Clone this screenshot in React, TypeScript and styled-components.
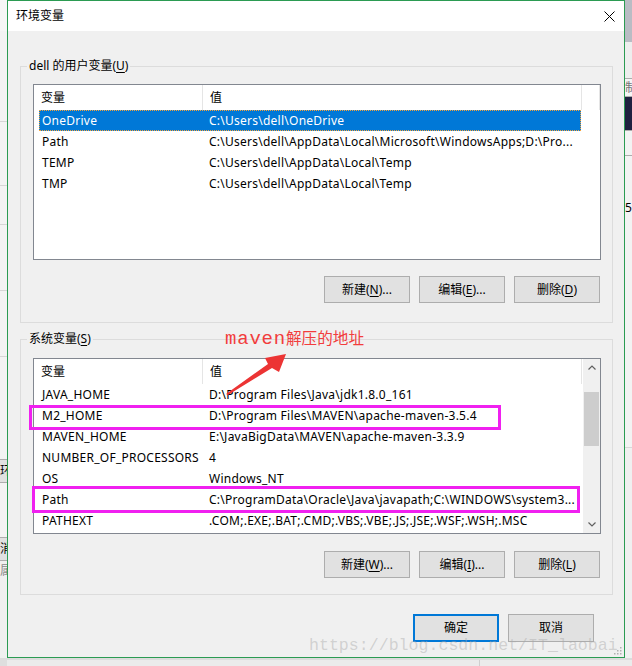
import React from "react";
import styled, { createGlobalStyle } from "styled-components";

const UI_FONT = `"Noto Sans", "Noto Sans CJK SC", sans-serif`;

const Global = createGlobalStyle`
  html, body { margin: 0; padding: 0; background: #e8e8e8; }
  body { width: 632px; height: 666px; overflow: hidden; }
  #root { width: 632px; height: 666px; }
  * { box-sizing: border-box; }
`;

const Desktop = styled.div`
  position: relative;
  width: 632px;
  height: 666px;
  display: grid;
  grid-template-columns: 7px 618px 7px;
  grid-template-rows: 658px 8px;
  grid-template-areas: "left dialog right" "bottom bottom bottom";
  background: #e8e8e8;
  overflow: hidden;
`;

/* ---------- background windows peeking out ---------- */
const StripCol = styled.div<{ $area: string }>`
  grid-area: ${(p) => p.$area};
  display: flex;
  flex-direction: column;
  overflow: hidden;
`;

const StripSeg = styled.div<{
  $h: number;
  $bg: string;
  $line?: string;
  $boxed?: boolean;
  $color?: string;
}>`
  flex: 0 0 ${(p) => p.$h}px;
  background: ${(p) => p.$bg};
  border-bottom: ${(p) => (p.$line ? `1px solid ${p.$line}` : "none")};
  ${(p) => (p.$boxed ? "border-top: 1px solid #adadad; border-bottom: 1px solid #adadad;" : "")}
  font: 12px/${(p) => p.$h - 2}px ${UI_FONT};
  color: ${(p) => p.$color ?? "#000"};
  white-space: nowrap;
  overflow: hidden;
`;

const BottomStrip = styled.div`
  grid-area: bottom;
  background: #ebebeb;
  border-top: 2px solid #dcdcdc;
  display: flex;
`;

const BottomLeft = styled.div`
  width: 7px;
  background: #dedede;
`;

const BottomSplit = styled.div`
  margin-left: 472px;
  width: 1px;
  background: #cfcfcf;
`;

type Seg = { h: number; bg: string; line?: string; text?: string; color?: string; boxed?: boolean };

const leftSegs: Seg[] = [
  { h: 31, bg: "#f6f6f6" },
  { h: 91, bg: "#f3f3f3", line: "#d6d6d6" },
  { h: 64, bg: "#f3f3f3", line: "#d6d6d6" },
  { h: 39, bg: "#f3f3f3", line: "#d6d6d6" },
  { h: 66, bg: "#f3f3f3", line: "#d6d6d6" },
  { h: 66, bg: "#f3f3f3", line: "#d6d6d6" },
  { h: 102, bg: "#f3f3f3" },
  { h: 24, bg: "#e1e1e1", boxed: true, text: "环" },
  { h: 54, bg: "#f3f3f3" },
  { h: 24, bg: "#e1e1e1", boxed: true, text: "消" },
  { h: 22, bg: "#f0f0f0", text: "属", color: "#8a8a8a" },
  { h: 80, bg: "#f0f0f0" },
];

const rightSegs: Seg[] = [
  { h: 42, bg: "#b9bcc4" },
  { h: 36, bg: "#eeeeee" },
  { h: 19, bg: "#f5f5f5", boxed: true, text: "制", color: "#777" },
  { h: 33, bg: "#1f2140" },
  { h: 26, bg: "#f3f3f3", boxed: true },
  { h: 44, bg: "#f3f3f3" },
  { h: 18, bg: "#f3f3f3", text: "51" },
  { h: 230, bg: "#f3f3f3", line: "#d8d8d8" },
  { h: 210, bg: "#f0f0f0" },
];

const Strip: React.FC<{ area: string; segs: Seg[] }> = ({ area, segs }) => (
  <StripCol $area={area}>
    {segs.map((s, i) => (
      <StripSeg key={i} $h={s.h} $bg={s.bg} $line={s.line} $boxed={s.boxed} $color={s.color}>
        {s.text}
      </StripSeg>
    ))}
  </StripCol>
);

/* ---------- dialog ---------- */
const Dialog = styled.section`
  grid-area: dialog;
  display: flex;
  flex-direction: column;
  border: 1px solid #2b9b52;
  background: #f0f0f0;
  font-family: ${UI_FONT};
  font-size: 12px;
  color: #000;
`;

const TitleBar = styled.header`
  flex: 0 0 30px;
  background: #fff;
  display: flex;
  align-items: center;
  justify-content: space-between;
  padding-left: 8px;
`;

const Title = styled.span`
  font-size: 12px;
  line-height: 16px;
`;

const CloseBtn = styled.div`
  width: 30px;
  height: 30px;
  display: flex;
  align-items: center;
  justify-content: center;
`;

const Body = styled.div`
  flex: 1;
  display: flex;
  flex-direction: column;
  padding: 35px 11px 0 12px;
`;

const Group = styled.div<{ $mt: number; $pt: number; $pb: number }>`
  position: relative;
  margin-top: ${(p) => p.$mt}px;
  border: 1px solid #dcdcdc;
  padding: ${(p) => p.$pt}px 11px ${(p) => p.$pb}px 12px;
  display: flex;
  flex-direction: column;
`;

const Legend = styled.span`
  position: absolute;
  top: -9px;
  left: 6px;
  padding: 0 2px;
  background: #f0f0f0;
  line-height: 16px;
`;

const Key = styled.span`
  text-decoration: underline;
  text-underline-offset: 2px;
`;

const ListView = styled.div`
  height: 176px;
  border: 1px solid #828790;
  background: #fff;
  display: flex;
  overflow: hidden;
`;

const ListMain = styled.div`
  flex: 1;
  min-width: 0;
  display: flex;
  flex-direction: column;
`;

const HeaderRow = styled.div`
  display: flex;
  height: 25px;
  flex: 0 0 25px;
`;

const HeaderCell = styled.div<{ $w?: number }>`
  ${(p) => (p.$w ? `flex: 0 0 ${p.$w}px;` : "flex: 1;")}
  border-right: 1px solid #e5e5e5;
  padding-left: 7px;
  line-height: 25px;
  white-space: nowrap;
`;

const Rows = styled.div`
  display: flex;
  flex-direction: column;
  padding-left: 5px;
`;

const Row = styled.div<{ $selected?: boolean }>`
  width: 542px;
  height: 21px;
  display: grid;
  grid-template-columns: 163px 1fr;
  line-height: 21px;
  white-space: nowrap;
  letter-spacing: 0.25px;
  background: ${(p) => (p.$selected ? "#0078d7" : "transparent")};
  color: ${(p) => (p.$selected ? "#fff" : "#000")};
  outline: ${(p) => (p.$selected ? "1px dotted #f7a33a" : "none")};
  outline-offset: -1px;
`;

const NameCell = styled.span`
  padding-left: 3px;
  overflow: hidden;
`;

const ValueCell = styled.span`
  padding-left: 7px;
  overflow: hidden;
`;

const ScrollBar = styled.div`
  flex: 0 0 17px;
  background: #f0f0f0;
  display: flex;
  flex-direction: column;
`;

const ScrollArrow = styled.div`
  flex: 0 0 17px;
  display: flex;
  align-items: center;
  justify-content: center;
`;

const ScrollTrack = styled.div`
  flex: 1;
  padding: 0 1px;
`;

const Thumb = styled.div`
  height: 54px;
  background: #cdcdcd;
`;

const ButtonRow = styled.div<{ $mt: number }>`
  display: flex;
  justify-content: flex-end;
  gap: 9px;
  margin-top: ${(p) => p.$mt}px;
  margin-right: 1px;
`;

const Button = styled.button<{ $default?: boolean; $h?: number }>`
  width: 86px;
  height: ${(p) => p.$h ?? 27}px;
  padding: 0;
  background: #e1e1e1;
  border: ${(p) => (p.$default ? "2px solid #0078d7" : "1px solid #adadad")};
  font-family: ${UI_FONT};
  font-size: 12px;
  color: #000;
  line-height: 16px;
`;

const Footer = styled.div`
  display: flex;
  justify-content: flex-end;
  gap: 9px;
  margin-top: 19px;
  margin-right: 19px;
`;

/* ---------- annotations drawn on top of the screenshot ---------- */
const Note = styled.div`
  position: absolute;
  left: 225px;
  top: 327px;
  color: #f23d3d;
  line-height: 20px;
  white-space: nowrap;
`;

const NoteLatin = styled.span`
  font-family: "Liberation Mono", monospace;
  font-size: 19px;
  letter-spacing: 0.8px;
`;

const NoteCjk = styled.span`
  font-family: "Noto Sans CJK SC", sans-serif;
  font-size: 15.6px;
`;

const ArrowSvg = styled.svg`
  position: absolute;
  left: 220px;
  top: 345px;
`;

const Highlight = styled.div<{ $x: number; $y: number; $w: number; $h: number }>`
  position: absolute;
  left: ${(p) => p.$x}px;
  top: ${(p) => p.$y}px;
  width: ${(p) => p.$w}px;
  height: ${(p) => p.$h}px;
  border: 3px solid #f020f0;
`;

const Watermark = styled.div`
  position: absolute;
  left: 309px;
  top: 636px;
  font-family: "Liberation Mono", monospace;
  font-size: 16.6px;
  line-height: 20px;
  color: rgba(170, 170, 170, 0.45);
  white-space: nowrap;
`;

const Grip = styled.svg`
  position: absolute;
  left: 613px;
  top: 646px;
`;

type Var = { name: string; value: string; selected?: boolean };

const userVars: Var[] = [
  { name: "OneDrive", value: "C:\\Users\\dell\\OneDrive", selected: true },
  { name: "Path", value: "C:\\Users\\dell\\AppData\\Local\\Microsoft\\WindowsApps;D:\\Pro..." },
  { name: "TEMP", value: "C:\\Users\\dell\\AppData\\Local\\Temp" },
  { name: "TMP", value: "C:\\Users\\dell\\AppData\\Local\\Temp" },
];

const sysVars: Var[] = [
  { name: "JAVA_HOME", value: "D:\\Program Files\\Java\\jdk1.8.0_161" },
  { name: "M2_HOME", value: "D:\\Program Files\\MAVEN\\apache-maven-3.5.4" },
  { name: "MAVEN_HOME", value: "E:\\JavaBigData\\MAVEN\\apache-maven-3.3.9" },
  { name: "NUMBER_OF_PROCESSORS", value: "4" },
  { name: "OS", value: "Windows_NT" },
  { name: "Path", value: "C:\\ProgramData\\Oracle\\Java\\javapath;C:\\WINDOWS\\system3..." },
  { name: "PATHEXT", value: ".COM;.EXE;.BAT;.CMD;.VBS;.VBE;.JS;.JSE;.WSF;.WSH;.MSC" },
];

const Chevron: React.FC<{ up?: boolean }> = ({ up }) => (
  <svg width="8" height="5" viewBox="0 0 8 5">
    <path
      d={up ? "M0.5 4.5 L4 1 L7.5 4.5" : "M0.5 0.5 L4 4 L7.5 0.5"}
      fill="none"
      stroke="#606060"
      strokeWidth="1.2"
    />
  </svg>
);

const VarList: React.FC<{ vars: Var[]; scroll?: boolean }> = ({ vars, scroll }) => (
  <ListView>
    <ListMain>
      <HeaderRow>
        <HeaderCell $w={169}>变量</HeaderCell>
        <HeaderCell $w={379}>值</HeaderCell>
        {!scroll && <HeaderCell />}
      </HeaderRow>
      <Rows>
        {vars.map((v) => (
          <Row key={v.name + v.value} $selected={v.selected}>
            <NameCell>{v.name}</NameCell>
            <ValueCell>{v.value}</ValueCell>
          </Row>
        ))}
      </Rows>
    </ListMain>
    {scroll && (
      <ScrollBar>
        <ScrollArrow>
          <Chevron up />
        </ScrollArrow>
        <ScrollTrack>
          <Thumb style={{ marginTop: 16 }} />
        </ScrollTrack>
        <ScrollArrow>
          <Chevron />
        </ScrollArrow>
      </ScrollBar>
    )}
  </ListView>
);

export default function App() {
  return (
    <>
      <Global />
      <Desktop>
        <Strip area="left" segs={leftSegs} />
        <Dialog>
          <TitleBar>
            <Title>环境变量</Title>
            <CloseBtn>
              <svg width="11" height="11" viewBox="0 0 11 11">
                <path d="M0.5 0.5 L10.5 10.5 M10.5 0.5 L0.5 10.5" stroke="#000" strokeWidth="1" />
              </svg>
            </CloseBtn>
          </TitleBar>
          <Body>
            <Group $mt={0} $pt={17} $pb={19}>
              <Legend>
                dell 的用户变量(<Key>U</Key>)
              </Legend>
              <VarList vars={userVars} />
              <ButtonRow $mt={16}>
                <Button>
                  新建(<Key>N</Key>)...
                </Button>
                <Button>
                  编辑(<Key>E</Key>)...
                </Button>
                <Button>
                  删除(<Key>D</Key>)
                </Button>
              </ButtonRow>
            </Group>
            <Group $mt={16} $pt={18} $pb={16}>
              <Legend>
                系统变量(<Key>S</Key>)
              </Legend>
              <VarList vars={sysVars} scroll />
              <ButtonRow $mt={17}>
                <Button>
                  新建(<Key>W</Key>)...
                </Button>
                <Button>
                  编辑(<Key>I</Key>)...
                </Button>
                <Button>
                  删除(<Key>L</Key>)
                </Button>
              </ButtonRow>
            </Group>
            <Footer>
              <Button $default $h={28}>
                确定
              </Button>
              <Button $h={28}>取消</Button>
            </Footer>
          </Body>
        </Dialog>
        <Strip area="right" segs={rightSegs} />
        <BottomStrip>
          <BottomLeft />
          <BottomSplit />
        </BottomStrip>

        <Note>
          <NoteLatin>maven</NoteLatin>
          <NoteCjk>解压的地址</NoteCjk>
        </Note>
        <ArrowSvg width="75" height="55" viewBox="220 345 75 55">
          <polygon
            points="226,394 268,364 265,358 286,354 279,372 272,368 228,395"
            fill="#ec3434"
          />
        </ArrowSvg>
        <Highlight $x={29} $y={405} $w={472} $h={25} />
        <Highlight $x={32} $y={486} $w={548} $h={27} />
        <Watermark>https://blog.csdn.net/IT_laobai</Watermark>
        <Grip width="9" height="9" viewBox="0 0 9 9">
          {[
            [7, 1],
            [4, 4],
            [7, 4],
            [1, 7],
            [4, 7],
            [7, 7],
          ].map(([x, y]) => (
            <rect key={`${x}-${y}`} x={x} y={y} width="1.5" height="1.5" fill="#b0b0b0" />
          ))}
        </Grip>
      </Desktop>
    </>
  );
}
